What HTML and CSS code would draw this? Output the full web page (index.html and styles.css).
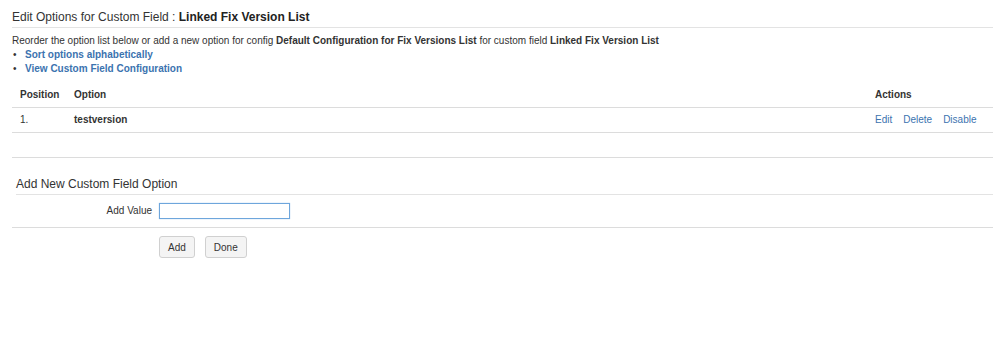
FILE: index.html
```html
<!DOCTYPE html>
<html lang="en">
  <head>
    <meta charset="UTF-8" />
    <title>Edit Options for Custom Field</title>
    <link rel="stylesheet" href="styles.css">
  </head>
  <body>
    <div class="page">
      <h2 class="page-title">Edit Options for Custom Field : <b>Linked Fix Version List</b></h2>

      <p class="intro">
        Reorder the option list below or add a new option for config
        <b>Default Configuration for Fix Versions List</b> for custom field
        <b>Linked Fix Version List</b>
      </p>
      <ul class="links">
        <li><a href="#">Sort options alphabetically</a></li>
        <li><a href="#">View Custom Field Configuration</a></li>
      </ul>

      <table class="options">
        <thead>
          <tr>
            <th class="col-pos">Position</th>
            <th>Option</th>
            <th class="col-actions">Actions</th>
          </tr>
        </thead>
        <tbody>
          <tr>
            <td class="col-pos">1.</td>
            <td><b>testversion</b></td>
            <td class="col-actions">
              <div class="actions">
                <a href="#">Edit</a>
                <a href="#">Delete</a>
                <a href="#">Disable</a>
              </div>
            </td>
          </tr>
        </tbody>
      </table>
      <div class="spacer"></div>

      <form class="add-form">
        <h3>Add New Custom Field Option</h3>
        <div class="field-row">
          <label for="addValue">Add Value</label>
          <input id="addValue" type="text" autofocus />
        </div>
        <div class="buttons">
          <button type="submit">Add</button>
          <button type="button">Done</button>
        </div>
      </form>
    </div>
  </body>
</html>
```

FILE: styles.css
```css
* {
  margin: 0;
  padding: 0;
  box-sizing: border-box;
}

body {
  background: white;
  color: #333;
  font-family: "Liberation Sans", Arial, sans-serif;
  font-size: 10px;
  line-height: 14px;
}

a {
  color: #3b73af;
  text-decoration: none;
}

.page {
  padding: 0 6px 0 12px;
}

.page-title {
  font-size: 12px;
  font-weight: normal;
  line-height: 20px;
  padding-top: 7px;
  border-bottom: 1px solid #e3e3e3;
  color: #333;
}

.page-title b {
  color: #222;
}

.intro {
  margin-top: 6px;
}

.links {
  list-style: none;
}

.links li::before {
  content: "\2022";
  display: inline-block;
  width: 12px;
  padding-left: 1px;
  color: #333;
}

.links a {
  font-weight: bold;
}

.options {
  width: 100%;
  margin-top: 7px;
  border-collapse: collapse;
  table-layout: fixed;
}

.options th,
.options td {
  text-align: left;
  padding: 5px 8px;
  border-bottom: 1px solid #dcdcdc;
}

.options th {
  font-weight: bold;
}

.options .col-pos {
  width: 54px;
}

.options .col-actions {
  width: 126px;
}

.actions {
  display: flex;
  gap: 11px;
}

.spacer {
  height: 25px;
  border-bottom: 1px solid #dcdcdc;
}

.add-form h3 {
  margin: 16px 0 0 4px;
  font-size: 12px;
  font-weight: normal;
  line-height: 20px;
  border-bottom: 1px solid #e3e3e3;
}

.field-row {
  display: flex;
  align-items: center;
  padding: 8px 0;
  border-bottom: 1px solid #dcdcdc;
}

.field-row label {
  width: 140px;
  text-align: right;
  margin-right: 7px;
}

.field-row input {
  width: 131px;
  height: 16px;
  border: 1px solid #6ea6dc;
  padding: 0 2px;
  font-family: inherit;
  font-size: 10px;
  outline: none;
  box-shadow: 0 0 1px #9cc4ea;
}

.buttons {
  display: flex;
  gap: 10px;
  padding: 8px 0 0 147px;
}

.buttons button {
  height: 22px;
  padding: 0 8px;
  background: #f4f4f4;
  border: 1px solid #d0d0d0;
  border-radius: 3px;
  color: #333;
  font-family: inherit;
  font-size: 10px;
}
```
